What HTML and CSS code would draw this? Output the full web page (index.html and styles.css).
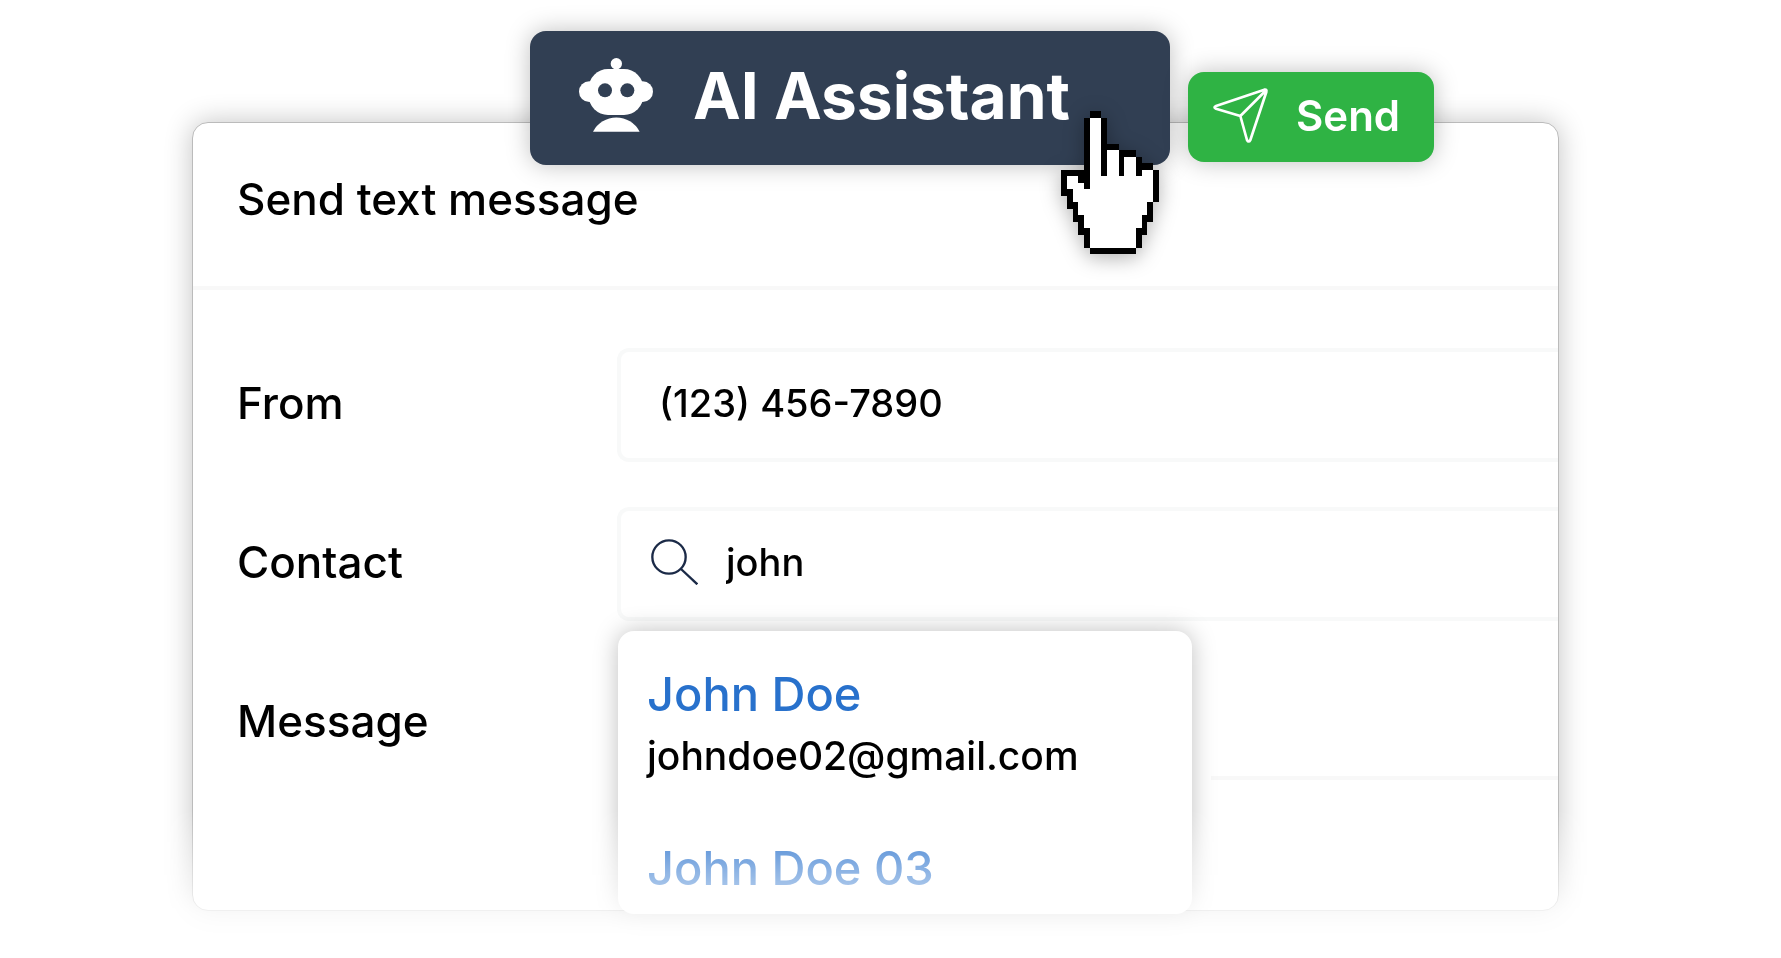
FILE: index.html
```html
<!DOCTYPE html>
<html lang="en">
<head>
    <meta charset="UTF-8">
    <title>Send text message</title>
    <link rel="stylesheet" href="styles.css">
</head>
<body>
    <div class="stage">
        <main class="panel">
            <header class="panel-header">
                <h1>Send text message</h1>
            </header>

            <form class="message-form">
                <div class="row">
                    <label for="from">From</label>
                    <div class="field">
                        <input type="tel" id="from" value="(123) 456-7890">
                    </div>
                </div>

                <div class="row">
                    <label for="contact">Contact</label>
                    <div class="field field-search">
                        <svg class="search-icon" viewBox="0 0 141 138" aria-hidden="true">
                            <circle cx="54" cy="54" r="50"/>
                            <path d="M90 90 L139 136"/>
                        </svg>
                        <input type="text" id="contact" value="john">
                        <ul class="suggestions">
                            <li>
                                <a href="#">John Doe</a>
                                <span>johndoe02@gmail.com</span>
                            </li>
                            <li>
                                <a href="#">John Doe 03</a>
                            </li>
                        </ul>
                    </div>
                </div>

                <div class="row">
                    <label for="message">Message</label>
                    <textarea id="message"></textarea>
                </div>
            </form>

            <div class="actions">
                <button type="button" class="btn btn-assistant">
                    <svg class="robot-icon" viewBox="0 0 222 222" aria-hidden="true">
                        <circle cx="112" cy="17" r="17"/>
                        <circle cx="31" cy="101" r="31"/>
                        <circle cx="191" cy="101" r="31"/>
                        <rect x="29" y="33" width="164" height="138" rx="58"/>
                        <circle class="eye" cx="78" cy="97" r="21"/>
                        <circle class="eye" cx="145" cy="97" r="21"/>
                        <path d="M42 221 A79 79 0 0 1 182 221 Z"/>
                    </svg>
                    AI Assistant
                </button>
                <button type="button" class="btn btn-send">
                    <svg class="plane-icon" viewBox="0 0 165 165" aria-hidden="true">
                        <path d="M154 5 L9 54 Q0 58 9 62 L82 84 L102 156 Q107 165 112 156 L160 12 Q162 3 154 5 Z M82 84 L157 9"/>
                    </svg>
                    Send
                </button>

                <svg class="pointer" viewBox="0 0 17 22" preserveAspectRatio="none" shape-rendering="crispEdges" aria-hidden="true">
                    <path d="M5 0h2v1h1v4h2v1h3v1h1v1h2v1h1v5h-1v3h-1v2h-1v2h-1v1h-8v-1h-1v-2h-1v-2h-1v-2h-1v-2h-1v-4h4v-8h1z"/>
                    <path class="pointer-fill" d="M5 1h2v9h1v-4h2v4h1v-3h2v3h1v-1h2v5h-1v2h-1v2h-1v3h-8v-3h-1v-2h-1v-2h-1v-2h-1v-2h2v1h1v1h1z"/>
                </svg>
            </div>
        </main>
    </div>
</body>
</html>
```

FILE: styles.css
```css
* {
    box-sizing: border-box;
}

body {
    margin: 0;
    background-color: #ffffff;
    color: #000000;
    font-family: Inter, "Liberation Sans", sans-serif;
    font-optical-sizing: none;
}

input,
textarea,
button {
    color: inherit;
    font: inherit;
    font-optical-sizing: none;
}

/* the whole scene fades out towards the bottom */
.stage {
    padding: 122px 222px 47px 192px;
    -webkit-mask-image: linear-gradient(#000 calc(100% - 148px), rgba(0, 0, 0, 0.2) calc(100% - 44px));
    mask-image: linear-gradient(#000 calc(100% - 148px), rgba(0, 0, 0, 0.2) calc(100% - 44px));
}

.panel {
    position: relative;
    padding-bottom: 130px;
    background-color: #ffffff;
    border: 1px solid #bbbbbb;
    border-radius: 16px;
    box-shadow: 0 0 28px rgba(0, 0, 0, 0.24);
}

.panel-header {
    padding: 46px 44px 57px;
    border-bottom: 4px solid #f8f8f8;
}

.panel-header h1 {
    margin: 0;
    font-size: 44px;
    font-weight: 500;
    line-height: 60px;
}

.message-form {
    display: flex;
    flex-direction: column;
    gap: 45px;
    padding-top: 58px;
}

.row {
    display: grid;
    grid-template-columns: 380px 1fr;
    align-items: center;
    min-height: 114px;
    padding-left: 44px;
}

.row label {
    padding-bottom: 4px;
    font-size: 44px;
    font-weight: 500;
}

.field {
    position: relative;
    display: flex;
    align-items: center;
    height: 114px;
    padding-left: 38px;
    padding-bottom: 4px;
    border: 4px solid #f8f9f9;
    border-right: none;
    border-radius: 12px 0 0 12px;
}

.field input {
    flex: 1;
    min-width: 0;
    padding: 0;
    background: none;
    border: none;
    outline: none;
    font-size: 38px;
    font-weight: 500;
}

.field-search {
    gap: 28px;
    padding-left: 30px;
}

.search-icon {
    width: 47px;
    height: 46px;
    fill: none;
    stroke: #1b2a47;
    stroke-width: 7;
}

.suggestions {
    position: absolute;
    top: 120px;
    left: -3px;
    z-index: 1;
    display: flex;
    flex-direction: column;
    gap: 50px;
    width: 574px;
    margin: 0;
    padding: 33px 28px 16px 29px;
    list-style: none;
    background-color: #ffffff;
    border-radius: 16px;
    box-shadow: 0 0 24px rgba(0, 0, 0, 0.25);
}

.suggestions li {
    display: flex;
    flex-direction: column;
}

.suggestions a {
    color: #2871cc;
    font-size: 47px;
    font-weight: 500;
    line-height: 60px;
    text-decoration: none;
}

.suggestions span {
    font-size: 39px;
    font-weight: 500;
    line-height: 64px;
}

.row textarea {
    height: 114px;
    margin-left: 594px;
    background: none;
    border: none;
    border-bottom: 4px solid #f8f8f8;
    outline: none;
    resize: none;
}

/* buttons floating over the top edge */
.actions {
    position: absolute;
    top: -92px;
    left: 337px;
    display: flex;
    align-items: flex-end;
    gap: 18px;
}

.btn {
    display: flex;
    align-items: center;
    border: none;
    color: #ffffff;
    white-space: nowrap;
    box-shadow: 0 0 24px rgba(0, 0, 0, 0.25);
    cursor: pointer;
}

.btn-assistant {
    gap: 40px;
    width: 640px;
    height: 134px;
    padding: 0 48px 6px 49px;
    background-color: #313f53;
    border-radius: 16px;
    font-size: 64px;
    font-weight: 700;
}

.btn-send {
    gap: 28px;
    width: 246px;
    height: 90px;
    margin-bottom: 3px;
    padding: 0 24px 4px 25px;
    background-color: #2fb344;
    border-radius: 16px;
    font-size: 42px;
    font-weight: 600;
}

.robot-icon {
    width: 74px;
    height: 74px;
    fill: #ffffff;
}

.robot-icon .eye {
    fill: #313f53;
}

.plane-icon {
    width: 55px;
    height: 55px;
    fill: none;
    stroke: #ffffff;
    stroke-width: 8;
    stroke-linejoin: round;
    overflow: visible;
}

.pointer {
    position: absolute;
    top: 80px;
    left: 531px;
    width: 98px;
    height: 143px;
    filter: drop-shadow(0 4px 10px rgba(0, 0, 0, 0.3));
}

.pointer-fill {
    fill: #ffffff;
}
```
